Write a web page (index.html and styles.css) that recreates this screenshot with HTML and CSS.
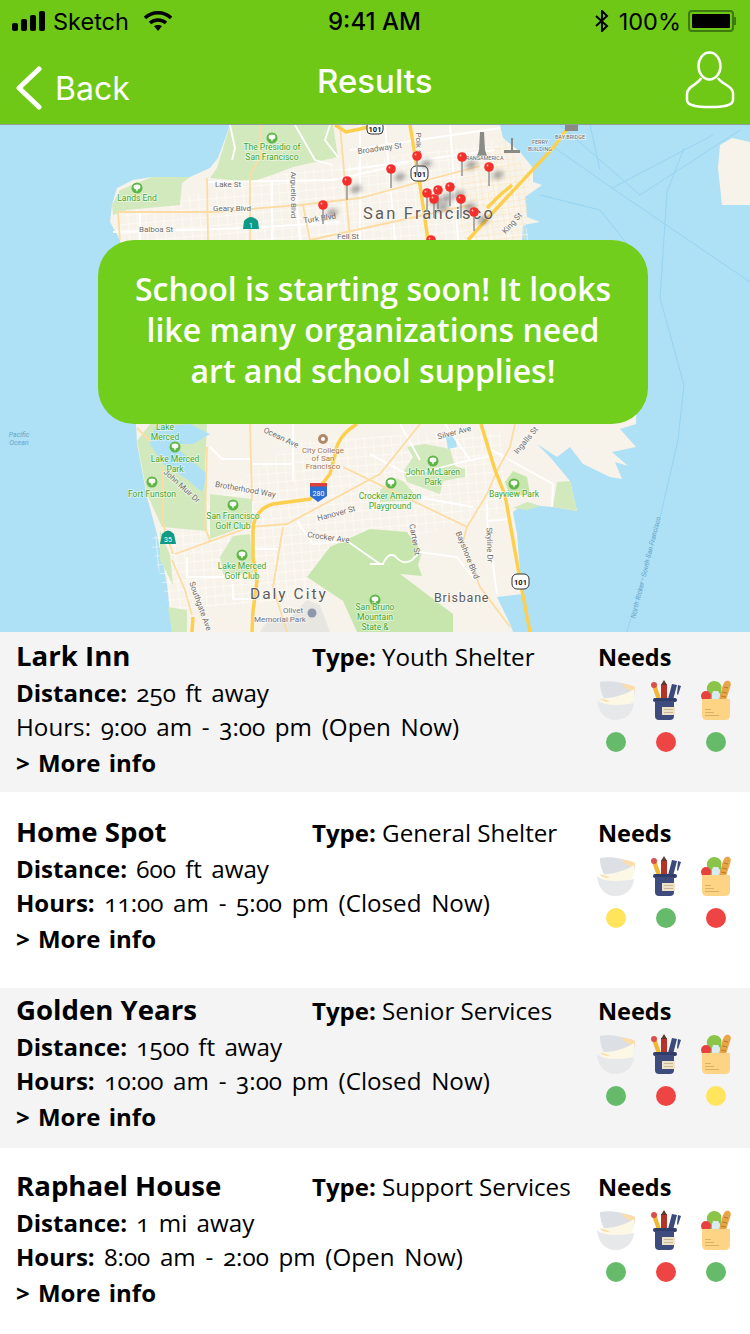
FILE: index.html
```html
<!DOCTYPE html>
<html lang="en">
<head>
  <meta charset="UTF-8" />
  <title>Results</title>
  <link rel="stylesheet" href="styles.css">
</head>
<body>

<svg class="defs" width="0" height="0">
  <defs>
    <filter id="blur" x="-100%" y="-100%" width="300%" height="300%"><feGaussianBlur stdDeviation="2.400" /></filter>
    <pattern id="grid" width="9" height="9" patternUnits="userSpaceOnUse" patternTransform="rotate(-5)">
      <path d="M0 0 H9 M0 0 V9" fill="none" stroke="#fff" stroke-width="1" />
    </pattern>
    <pattern id="gridcity" width="6" height="6" patternUnits="userSpaceOnUse" patternTransform="rotate(-8)">
      <path d="M0 0 H6 M0 0 V6" fill="none" stroke="#fbe2b4" stroke-width=".9" />
    </pattern>
    <symbol id="pin" viewBox="0 0 30 30" overflow="visible">
      <ellipse cx="9" cy="8" rx="6" ry="3.500" fill="#444" opacity=".5" filter="url(#blur)" transform="rotate(-20 9 8)" />
      <rect x="-.8" y="3" width="1.600" height="16" fill="#999" />
      <circle cx="0" cy="0" r="4.800" fill="#f5302c" />
      <circle cx="-1.500" cy="-1.500" r=".9" fill="#ffc2b8" />
    </symbol>
    <symbol id="tree" viewBox="0 0 12 12" overflow="visible">
      <circle cx="6" cy="6" r="5.500" fill="#5fb548" />
      <ellipse cx="6" cy="5" rx="3.400" ry="2.400" fill="#fff" />
      <rect x="5.400" y="6" width="1.200" height="3.200" fill="#fff" />
    </symbol>
    <symbol id="bowls" viewBox="0 0 40 40">
      <path d="M3 2 C14 0 28 3 38 7 C39 17 33 26 20 26 C9 26 3 15 3 2Z" fill="#dcdfe3" />
      <path d="M24 4 C30 4 35 5 38 7 L37 12 C32 10 28 8 24 4Z" fill="#fcdca8" />
      <path d="M3 18 C14 19 28 15 37 9 C38 15 36 21 33 25 L8 25 C6 23 4 21 3 18Z" fill="#fdf7e6" />
      <path d="M0 20 C6 25 18 27 37 23 C36 34 28 40 18 40 C8 40 1 32 0 20Z" fill="#e6e8ea" />
      <path d="M3 18.500 C7 19 10 20 13 22 C8 22 4 20.500 3 18.500Z" fill="#fcdca8" />
    </symbol>
    <symbol id="supplies" viewBox="0 0 30 40">
      <path d="M1 6 L5 4 L10 19 L6 20Z" fill="#f2b632" />
      <circle cx="3" cy="5" r="3" fill="#d8504d" />
      <rect x="10" y="4" width="6" height="15" fill="#b5342a" />
      <path d="M10 5 L13 0 L16 5Z" fill="#5a3b30" />
      <path d="M21 4 L26 5 L22 20 L17 19Z" fill="#3a4a7a" />
      <path d="M27 5 L30 6 L27 15 L26 14Z" fill="#3a4a7a" />
      <rect x="2" y="18" width="24" height="4" rx="2" fill="#2f3d68" />
      <path d="M4 21 H23 V36 Q23 40 19 40 H8 Q4 40 4 36Z" fill="#3d4c7d" />
      <rect x="11" y="27" width="13" height="8" fill="#eee3c9" />
      <rect x="13" y="29" width="9" height="1" fill="#c4b898" />
      <rect x="13" y="32" width="9" height="1" fill="#c4b898" />
    </symbol>
    <symbol id="food" viewBox="0 0 32 40">
      <path d="M7 10 C6 5 10 1 14 1 C19 1 23 5 21 10 L21 20 H9Z" fill="#8cc44a" />
      <circle cx="6" cy="16" r="5" fill="#e8403f" />
      <path d="M13 11 H18 L20 14 V21 H12 V14Z" fill="#d7ebf0" />
      <path d="M26 1 C30 0 31.500 3 30.500 6 L26 20 L19 20 L22 8 C23 5 24 2 26 1Z" fill="#e8a548" />
      <path d="M24 7 L28 8 M22.500 12 L27 13 M21 16 L26 17" stroke="#b9762a" stroke-width="1" />
      <path d="M2 19 H30 V35 Q30 40 25 40 H7 Q2 40 2 35Z" fill="#fdd386" />
      <rect x="5" y="29" width="6" height="1" fill="#dcae62" />
      <rect x="5" y="32" width="9" height="1" fill="#dcae62" />
      <rect x="5" y="35" width="14" height="1" fill="#dcae62" />
    </symbol>
  </defs>
</svg>

<header class="topbar">
  <div class="status">
    <div class="status-left">
      <svg class="signal" width="34" height="20" viewBox="0 0 34 20">
        <rect x="0" y="12" width="6" height="8" rx="2" />
        <rect x="9" y="8" width="6" height="12" rx="2" />
        <rect x="18" y="4" width="6" height="16" rx="2" />
        <rect x="27" y="0" width="6" height="20" rx="2" />
      </svg>
      <span>Sketch</span>
      <svg class="wifi" width="28" height="20" viewBox="0 0 28 20">
        <path d="M1 7 C8 0 20 0 27 7" fill="none" stroke="#000" stroke-width="3.400" />
        <path d="M6 12 C10 8 18 8 22 12" fill="none" stroke="#000" stroke-width="3.400" />
        <path d="M10 15 C12 13.500 16 13.500 18 15 L14 20Z" />
      </svg>
    </div>
    <div class="status-time">9:41 AM</div>
    <div class="status-right">
      <svg class="bt" width="14" height="22" viewBox="0 0 14 22">
        <path d="M1 6 L12 16 L7 21 V1 L12 6 L1 16" fill="none" stroke="#000" stroke-width="2" />
      </svg>
      <span>100%</span>
      <div class="battery"><div class="battery-fill"></div></div>
      <div class="battery-nub"></div>
    </div>
  </div>
  <nav class="navbar">
    <a class="back">
      <svg width="28" height="44" viewBox="0 0 28 44">
        <path d="M24 3 L4 22 L24 41" fill="none" stroke="#fff" stroke-width="5" stroke-linecap="round" stroke-linejoin="round" />
      </svg>
      <span>Back</span>
    </a>
    <h1>Results</h1>
    <svg class="profile" width="50" height="58" viewBox="0 0 50 58">
      <ellipse cx="24.500" cy="15" rx="11" ry="13.500" fill="none" stroke="#fff" stroke-width="2.500" />
      <path d="M16 27 C14 33 2 35 2 43 V49 C2 55 12 56 25 56 C38 56 48 55 48 49 V42 C48 35 36 33 33 27" fill="none" stroke="#fff" stroke-width="2.500" />
    </svg>
  </nav>
</header>

<section class="map">
  <svg class="map-art" width="750" height="507" viewBox="0 125 750 507">
    <rect x="0" y="125" width="750" height="507" fill="#aee0f6" />

    <!-- land -->
    <path class="land" d="M230 125 L218 158 L210 168 L190 177 L152 177 L133 180 L117 188 L112 205 L110 222 L120 240 L136 424 L137 444 L147 497 L157 534 L167 584 L172 632 L513 632 L510 624 L497 597 L522 594 L517 534 L513 512 L527 502 L540 506 L553 507 L577 511 L570 481 L550 457 L537 444 L557 457 L570 447 L583 464 L610 477 L622 479 L615 462 L628 466 L612 452 L636 447 L620 429 L636 424 L640 300 L522 240 L523 225 L540 222 L527 217 L525 197 L542 185 L533 182 L533 168 L520 152 L503 138 L500 125Z" />
    <path class="land" d="M720 145 L732 138 L750 142 L750 205 L722 205 L718 168Z" />
    <path class="grid" d="M120 212 L300 170 L500 140 L530 240 L120 240Z" />
    <path class="grid" d="M150 540 L300 440 L500 430 L510 510 L400 540 L300 600 L170 610Z" />
    <path class="gridcity" d="M473 155 L505 140 L530 175 L525 240 L465 240 L455 195Z" />

    <!-- parks -->
    <path class="park" d="M230 125 L333 125 L338 157 L293 167 L272 175 L250 182 L210 178 L217 168Z" />
    <path class="park" d="M112 205 L120 190 L152 177 L190 177 L182 183 L180 205 L127 210 L113 215Z" />
    <path class="park" d="M137 441 L147 494 L162 527 L207 531 L205 467 L207 424 L150 424Z" />
    <path class="park" d="M210 494 L252 499 L252 524 L210 539Z" />
    <path class="park" d="M233 536 L250 534 L253 574 L223 574 L220 557Z" />
    <path class="park" d="M160 530 L170 555 L173 585 L160 560Z" />
    <path class="park" d="M168 607 L187 610 L187 632 L172 632Z" />
    <path class="park park-deep" d="M307 577 L330 547 L370 529 L407 532 L422 552 L418 565 L422 576 L400 574 L453 614 L453 632 L357 632 L343 601Z" />
    <path class="park" d="M407 447 L425 444 L450 449 L455 466 L465 469 L465 477 L443 481 L440 494 L407 482 L403 472 L413 457Z" />
    <path class="park" d="M380 491 L392 477 L403 481 L420 500 L380 502Z" />
    <path class="park park-deep" d="M505 482 L513 471 L527 477 L530 494 L510 496Z" />
    <path class="park" d="M557 482 L570 481 L577 511 L553 507Z" />
    <path class="park" d="M513 508 L527 502 L540 506 L527 510Z" />
    <path class="cemetery" d="M260 632 L268 620 L290 618 L307 600 L320 605 L330 632Z" />

    <!-- lakes -->
    <path class="lake" d="M150 444 L163 464 L187 479 L202 492 L207 474 L187 457 L173 444 L193 444 L210 434 L190 424 L155 427Z" />
    <path class="lake" d="M445 432 L455 437 L457 447 L448 449Z" />

    <!-- streets -->
    <g class="streets">
      <path d="M208 182 L333 180 L400 165 M113 232 L250 228 L340 222 M295 125 L315 160 L333 165 M230 125 L235 148 L232 160 M330 125 L325 140 L338 157" />
      <path d="M350 150 L500 128 M345 170 L495 150 M360 125 L360 240 M385 125 L395 240 M450 125 L458 240 M293 170 L300 240 M272 180 L272 240 M140 213 L140 240" />
      <path d="M210 447 L222 459 L250 459 M253 464 L293 464 M293 424 L293 481 M223 486 L277 496 M297 521 L313 544 L347 541 L380 564" />
      <path d="M370 564 L383 564 Q388 552 395 556 Q403 566 412 560 L420 552 L457 557 L470 574 L480 584" />
      <path d="M407 476 L467 461 L490 456 M370 454 L407 474 M417 497 L473 507 M487 501 L487 521 L510 519 M487 521 L497 594 M490 449 L553 484 L552 507" />
      <path d="M187 557 L187 577 L237 577 M233 584 L233 599 L253 599 M255 549 L278 549 M400 424 L420 460 M445 424 L470 460" />
    </g>
    <g class="arterials">
      <path d="M118 212 L213 212 L300 205 L360 198 L420 182 L480 166 M260 125 L260 158 L250 175 L250 240 M207 178 L208 240 M303 205 L310 240 M118 212 L120 240 M310 240 L470 205 M340 125 L350 240" />
      <path d="M175 554 L250 527 L287 524 L380 474 L420 424 M163 467 L163 524 L173 554 M207 447 L205 527 L210 541 M250 424 L252 501 M283 527 L273 587 L287 632" />
      <path d="M343 467 L467 527 L463 541 L480 587 L510 627 M467 527 L487 494 L497 471 L510 447 L515 424 M137 428 L150 441" />
      <path d="M172 560 L185 590 L192 615" />
    </g>
    <g class="highway">
      <path d="M335 125 L346 132 L360 129 L376 125" />
      <path d="M410 125 L420 185 L428 240" />
      <path d="M481 424 L495 470 L505 495 L521 585 L530 632" />
      <path d="M357 424 Q337 436 335 455 L330 474 L310 499 L273 504 Q253 510 253 532 L253 557 L257 581 L253 611 L252 632" />
      <path d="M468 240 L497 208 L553 148 L570 125" />
      <path d="M487 208 L500 195 L512 185" />
      <path d="M193 617 L192 632" />
    </g>

    <!-- bay lines -->
    <g class="ferry">
      <path d="M555 148 L612 188 L750 282 M612 188 L713 135 M684 148 L667 192 L660 298 L684 385 L678 440 L660 518 L627 632" />
      <path d="M560 125 L640 195 L740 130 M590 125 L600 170 M540 195 L600 210 L640 260" />
    </g>
    <text class="lbl lbl-water" transform="translate(648 568) rotate(-76)">North Ricker - South San Francisco</text>

    <!-- landmarks -->
    <path class="poi" d="M480 132 L484 132 L485 150 L487 156 L477 156 L479 150Z" />
    <path class="poi" d="M504 150 H520 V153 H504Z M511 138 H513 V150 H511Z" />
    <path class="poi" d="M565 125 H578 V131 H565Z" />

    <!-- park labels -->
    <use href="#tree" x="266" y="132" width="12" height="12" />
    <use href="#tree" x="131" y="182" width="12" height="12" />
    <use href="#tree" x="169" y="441" width="12" height="12" />
    <use href="#tree" x="146" y="476" width="12" height="12" />
    <use href="#tree" x="227" y="499" width="12" height="12" />
    <use href="#tree" x="236" y="549" width="12" height="12" />
    <use href="#tree" x="427" y="455" width="12" height="12" />
    <use href="#tree" x="385" y="477" width="12" height="12" />
    <use href="#tree" x="508" y="478" width="12" height="12" />
    <use href="#tree" x="369" y="594" width="12" height="12" />

    <text class="lbl lbl-park" x="272" y="150">The Presidio of</text>
    <text class="lbl lbl-park" x="272" y="160">San Francisco</text>
    <text class="lbl lbl-park" x="137" y="201">Lands End</text>
    <text class="lbl lbl-park" x="175" y="462">Lake Merced</text>
    <text class="lbl lbl-park" x="175" y="472">Park</text>
    <text class="lbl lbl-park" x="152" y="497">Fort Funston</text>
    <text class="lbl lbl-park" x="233" y="519">San Francisco</text>
    <text class="lbl lbl-park" x="233" y="529">Golf Club</text>
    <text class="lbl lbl-park" x="242" y="569">Lake Merced</text>
    <text class="lbl lbl-park" x="242" y="579">Golf Club</text>
    <text class="lbl lbl-park" x="433" y="475">John McLaren</text>
    <text class="lbl lbl-park" x="433" y="485">Park</text>
    <text class="lbl lbl-park" x="390" y="499">Crocker Amazon</text>
    <text class="lbl lbl-park" x="390" y="509">Playground</text>
    <text class="lbl lbl-park" x="514" y="497">Bayview Park</text>
    <text class="lbl lbl-park" x="375" y="610">San Bruno</text>
    <text class="lbl lbl-park" x="375" y="620">Mountain</text>
    <text class="lbl lbl-park" x="375" y="630">State &amp;</text>
    <text class="lbl lbl-park" x="165" y="430">Lake</text>
    <text class="lbl lbl-park" x="165" y="440">Merced</text>

    <!-- road labels -->
    <text class="lbl lbl-road" x="228" y="187">Lake St</text>
    <text class="lbl lbl-road" x="232" y="211">Geary Blvd</text>
    <text class="lbl lbl-road" x="156" y="232">Balboa St</text>
    <text class="lbl lbl-road" transform="translate(320 221) rotate(-8)">Turk Blvd</text>
    <text class="lbl lbl-road" x="348" y="239">Fell St</text>
    <text class="lbl lbl-road" transform="translate(380 151) rotate(-8)">Broadway St</text>
    <text class="lbl lbl-road" transform="translate(291 195) rotate(90)">Arguello Blvd</text>
    <text class="lbl lbl-road" transform="translate(416 145) rotate(90)">Polk St</text>
    <text class="lbl lbl-road" transform="translate(514 225) rotate(-48)">King St</text>
    <text class="lbl lbl-road" transform="translate(180 488) rotate(42)">John Muir Dr</text>
    <text class="lbl lbl-road" transform="translate(245 492) rotate(10)">Brotherhood Way</text>
    <text class="lbl lbl-road" transform="translate(280 440) rotate(25)">Ocean Ave</text>
    <text class="lbl lbl-road" transform="translate(337 516) rotate(-15)">Hanover St</text>
    <text class="lbl lbl-road" transform="translate(328 540) rotate(8)">Crocker Ave</text>
    <text class="lbl lbl-road" transform="translate(198 607) rotate(70)">Southgate Ave</text>
    <text class="lbl lbl-road" transform="translate(412 540) rotate(80)">Carter St</text>
    <text class="lbl lbl-road" transform="translate(465 556) rotate(68)">Bayshore Blvd</text>
    <text class="lbl lbl-road" transform="translate(487 545) rotate(88)">Skyline Dr</text>
    <text class="lbl lbl-road" transform="translate(455 435) rotate(-15)">Silver Ave</text>
    <text class="lbl lbl-road" transform="translate(528 442) rotate(-50)">Ingalls St</text>
    <text class="lbl lbl-tiny" x="540" y="144">FERRY</text>
    <text class="lbl lbl-tiny" x="540" y="151">BUILDING</text>
    <text class="lbl lbl-tiny" x="570" y="139">BAY BRIDGE</text>
    <text class="lbl lbl-tiny" x="483" y="160">TRANSAMERICA</text>

    <!-- city labels -->
    <text class="city city-sf" x="363" y="219">San Francisco</text>
    <text class="city city-daly" x="250" y="599">Daly City</text>
    <text class="city city-bris" x="434" y="602">Brisbane</text>
    <text class="lbl lbl-water" x="19" y="437">Pacific</text>
    <text class="lbl lbl-water" x="19" y="445">Ocean</text>
    <circle cx="323" cy="439" r="5" fill="#b08a68" />
    <circle cx="323" cy="439" r="2" fill="#fff" />
    <text class="lbl lbl-poi" x="323" y="453">City College</text>
    <text class="lbl lbl-poi" x="323" y="461">of San</text>
    <text class="lbl lbl-poi" x="323" y="469">Francisco</text>
    <text class="lbl lbl-grey" x="293" y="613">Olivet</text>
    <text class="lbl lbl-grey" x="280" y="622">Memorial Park</text>
    <circle cx="312" cy="613" r="4.500" fill="#8d98ad" />

    <!-- shields -->
    <path class="shield-ca" d="M244 221 Q251 213 258 221 L259 229 H243Z" />
    <path class="shield-ca" d="M162 534 Q168 527 174 534 L176 544 H160Z" />
    <text class="shield-mark" x="251" y="228">1</text>
    <text class="shield-mark" x="168" y="542">35</text>
    <rect class="shield-us" x="411" y="166" width="17" height="15" rx="5" />
    <rect class="shield-us" x="512" y="574" width="17" height="15" rx="5" />
    <rect class="shield-us" x="367" y="122" width="16" height="12" rx="4" />
    <text class="shield-num" x="419.500" y="176.500">101</text>
    <text class="shield-num" x="520.500" y="584.500">101</text>
    <text class="shield-num" x="375" y="132">101</text>
    <path d="M310 484 H327 V496 L318 502 L310 496Z" fill="#2a6fd6" />
    <rect x="310" y="483" width="17" height="3.500" fill="#d9413a" />
    <text class="shield-mark" x="318.500" y="496">280</text>

    <!-- pins -->
    <use href="#pin" x="431" y="240" width="30" height="30" />
    <use href="#pin" x="417" y="156" width="30" height="30" />
    <use href="#pin" x="462" y="157" width="30" height="30" />
    <use href="#pin" x="489" y="167" width="30" height="30" />
    <use href="#pin" x="391" y="169" width="30" height="30" />
    <use href="#pin" x="347" y="181" width="30" height="30" />
    <use href="#pin" x="323" y="205" width="30" height="30" />
    <use href="#pin" x="427" y="193" width="30" height="30" />
    <use href="#pin" x="438" y="190" width="30" height="30" />
    <use href="#pin" x="450" y="187" width="30" height="30" />
    <use href="#pin" x="434" y="199" width="30" height="30" />
    <use href="#pin" x="461" y="199" width="30" height="30" />
    <use href="#pin" x="474" y="212" width="30" height="30" />
  </svg>
  <div class="bubble">School is starting soon! It looks like many organizations need art and school supplies!</div>
</section>

<main class="results">

  <article class="place place-a">
    <div class="info">
      <div class="top-line">
        <h2>Lark Inn</h2>
        <p><b>Type:</b> Youth Shelter</p>
      </div>
      <p class="dist"><b>Distance:</b> 250 ft away</p>
      <p class="hours">Hours: 9:00 am - 3:00 pm (Open Now)</p>
      <p class="more"><b>&gt; More info</b></p>
    </div>
    <div class="needs">
      <h3>Needs</h3>
      <div class="icons">
        <svg class="i-bowls"><use href="#bowls" /></svg>
        <svg class="i-supplies"><use href="#supplies" /></svg>
        <svg class="i-food"><use href="#food" /></svg>
      </div>
      <div class="dots"><i class="green"></i><i class="red"></i><i class="green"></i></div>
    </div>
  </article>

  <article class="place place-b">
    <div class="info">
      <div class="top-line">
        <h2>Home Spot</h2>
        <p><b>Type:</b> General Shelter</p>
      </div>
      <p class="dist"><b>Distance:</b> 600 ft away</p>
      <p class="hours"><b>Hours:</b> 11:00 am - 5:00 pm (Closed Now)</p>
      <p class="more"><b>&gt; More info</b></p>
    </div>
    <div class="needs">
      <h3>Needs</h3>
      <div class="icons">
        <svg class="i-bowls"><use href="#bowls" /></svg>
        <svg class="i-supplies"><use href="#supplies" /></svg>
        <svg class="i-food"><use href="#food" /></svg>
      </div>
      <div class="dots"><i class="yellow"></i><i class="green"></i><i class="red"></i></div>
    </div>
  </article>

  <article class="place place-c">
    <div class="info">
      <div class="top-line">
        <h2>Golden Years</h2>
        <p><b>Type:</b> Senior Services</p>
      </div>
      <p class="dist"><b>Distance:</b> 1500 ft away</p>
      <p class="hours"><b>Hours:</b> 10:00 am - 3:00 pm (Closed Now)</p>
      <p class="more"><b>&gt; More info</b></p>
    </div>
    <div class="needs">
      <h3>Needs</h3>
      <div class="icons">
        <svg class="i-bowls"><use href="#bowls" /></svg>
        <svg class="i-supplies"><use href="#supplies" /></svg>
        <svg class="i-food"><use href="#food" /></svg>
      </div>
      <div class="dots"><i class="green"></i><i class="red"></i><i class="yellow"></i></div>
    </div>
  </article>

  <article class="place place-d">
    <div class="info">
      <div class="top-line">
        <h2>Raphael House</h2>
        <p><b>Type:</b> Support Services</p>
      </div>
      <p class="dist"><b>Distance:</b> 1 mi away</p>
      <p class="hours"><b>Hours:</b> 8:00 am - 2:00 pm (Open Now)</p>
      <p class="more"><b>&gt; More info</b></p>
    </div>
    <div class="needs">
      <h3>Needs</h3>
      <div class="icons">
        <svg class="i-bowls"><use href="#bowls" /></svg>
        <svg class="i-supplies"><use href="#supplies" /></svg>
        <svg class="i-food"><use href="#food" /></svg>
      </div>
      <div class="dots"><i class="green"></i><i class="red"></i><i class="green"></i></div>
    </div>
  </article>

</main>

</body>
</html>
```

FILE: styles.css
```css
html, body {
  margin: 0;
  padding: 0;
}
body {
  width: 750px;
  height: 1334px;
  overflow: hidden;
  background: #fff;
  color: #000;
  font-family: "Open Sans", "Noto Sans", sans-serif;
}
.defs {
  display: block;
  height: 0;
}

/* top bar */
.topbar {
  background: #6fc815;
  height: 124px;
  border-bottom: 1px solid #8f9f9a;
}
.status {
  height: 40px;
  display: flex;
  justify-content: space-between;
  align-items: center;
  padding: 2px 12px 0;
  box-sizing: border-box;
  font-family: Inter, Roboto, sans-serif;
  font-size: 23.500px;
  position: relative;
}
.status-left, .status-right {
  display: flex;
  align-items: center;
}
.signal {
  margin-right: 7px;
}
.wifi {
  margin-left: 15px;
}
.status-time {
  position: absolute;
  left: 328px;
  font-size: 24px;
  font-weight: 500;
}
.status-right {
  padding-right: 2px;
}
.bt {
  margin-right: 10px;
}
.battery {
  width: 46px;
  height: 22px;
  margin-left: 7px;
  border: 2px solid #3d7a10;
  border-radius: 4px;
  box-sizing: border-box;
  padding: 2px;
}
.battery-fill {
  background: #000;
  height: 100%;
  border-radius: 1px;
}
.battery-nub {
  width: 2px;
  height: 8px;
  background: #3d7a10;
}
.navbar {
  height: 84px;
  position: relative;
  display: flex;
  justify-content: space-between;
  align-items: flex-start;
  color: #fff;
}
.navbar h1 {
  position: absolute;
  left: 317px;
  top: 21px;
  margin: 0;
  font-family: Inter, Roboto, sans-serif;
  font-size: 33px;
  font-weight: 500;
}
.back {
  display: flex;
  align-items: center;
  margin: 26px 0 0 15px;
  font-family: Inter, Roboto, sans-serif;
  font-size: 32px;
}
.back span {
  margin-left: 12px;
}
.profile {
  margin: 11px 15px 0 0;
}

/* map */
.map {
  position: relative;
  height: 507px;
}
.map-art {
  display: block;
}
.land { fill: #f8f3ea; }
.grid { fill: url(#grid); }
.gridcity { fill: url(#gridcity); }
.park { fill: #d2e9bd; }
.park-deep { fill: #c7e6ae; }
.cemetery { fill: #e8e6e1; }
.lake { fill: #aee0f6; }
.streets path {
  fill: none;
  stroke: #fff;
  stroke-width: 1.800;
}
.arterials path {
  fill: none;
  stroke: #fcdca3;
  stroke-width: 1.800;
}
.highway path {
  fill: none;
  stroke: #fdcf4f;
  stroke-width: 3.500;
}
.ferry path {
  fill: none;
  stroke: #92d0f1;
  stroke-width: .8;
}
.poi { fill: #8b8b86; }
.map text {
  font-family: Roboto, sans-serif;
}
.lbl {
  font-size: 8.500px;
  text-anchor: middle;
  paint-order: stroke;
  stroke: #fff;
  stroke-width: 1.500px;
  stroke-opacity: .6;
}
.lbl-park { fill: #3fa62b; font-size: 8.500px; }
.lbl-road { fill: #6b6b6b; font-size: 8px; }
.lbl-tiny { fill: #6b6b6b; font-size: 5.500px; }
.lbl-poi { fill: #a87850; font-size: 8px; }
.lbl-grey { fill: #6c7488; font-size: 8px; }
.lbl-water {
  fill: #6aa5c4;
  font-size: 7px;
  font-style: italic;
  stroke: none;
}
.city {
  fill: #5c5c5c;
  paint-order: stroke;
  stroke: #fff;
  stroke-width: 1.500px;
  stroke-opacity: .6;
}
.city-sf { font-size: 16.500px; letter-spacing: 2.200px; }
.city-daly { font-size: 15.500px; letter-spacing: 2px; }
.city-bris { font-size: 12.500px; letter-spacing: .8px; }
.shield-ca { fill: #0e9a84; }
.shield-us {
  fill: #fff;
  stroke: #333;
}
.map .shield-num {
  fill: #111;
  font-size: 7.500px;
  font-weight: 700;
  text-anchor: middle;
}
.map .shield-mark {
  fill: #fff;
  font-size: 7px;
  text-anchor: middle;
}
.bubble {
  position: absolute;
  left: 98px;
  top: 115px;
  width: 550px;
  height: 184px;
  box-sizing: border-box;
  padding: 28px 30px 0;
  background: #72ce1c;
  border-radius: 36px;
  color: #fff;
  font-size: 32px;
  font-weight: 600;
  line-height: 41px;
  text-align: center;
}

/* results list */
.place {
  display: flex;
  box-sizing: border-box;
  font-size: 24.200px;
  font-variant-numeric: oldstyle-nums;
}
.place b {
  font-size: 24px;
}
.place-a { height: 160px; background: #f4f4f4; padding-top: 6px; }
.place-b { height: 196px; padding-top: 22px; }
.place-c { height: 160px; background: #f4f4f4; padding-top: 4px; }
.place-d { height: 186px; padding-top: 20px; }
.info {
  width: 598px;
  padding-left: 16px;
  box-sizing: border-box;
}
.info p {
  margin: 0;
  line-height: 34px;
}
.top-line {
  display: flex;
  align-items: center;
  height: 38px;
}
.top-line h2 {
  width: 296px;
  margin: -4px 0 0;
  font-size: 27.600px;
  font-weight: 700;
}
.dist {
  word-spacing: 3px;
}
.hours {
  word-spacing: 3.400px;
}
.place .more {
  margin-top: 2px;
  word-spacing: 2px;
}
.needs h3 {
  margin: 0;
  height: 42px;
  font-size: 23.500px;
  font-weight: 700;
  line-height: 38px;
}
.icons {
  display: flex;
  height: 40px;
  margin-left: 1px;
}
.icons svg {
  height: 40px;
}
.i-bowls {
  width: 40px;
  margin-left: -2px;
  margin-right: 14px;
}
.i-supplies {
  width: 30px;
  margin-right: 19px;
}
.i-food {
  width: 32px;
}
.dots {
  display: flex;
  gap: 30px;
  margin: 12px 0 0 8px;
}
.dots i {
  width: 20px;
  height: 20px;
  border-radius: 50%;
}
.green { background: #66bb6a; }
.red { background: #ef4444; }
.yellow { background: #ffe45c; }
```
